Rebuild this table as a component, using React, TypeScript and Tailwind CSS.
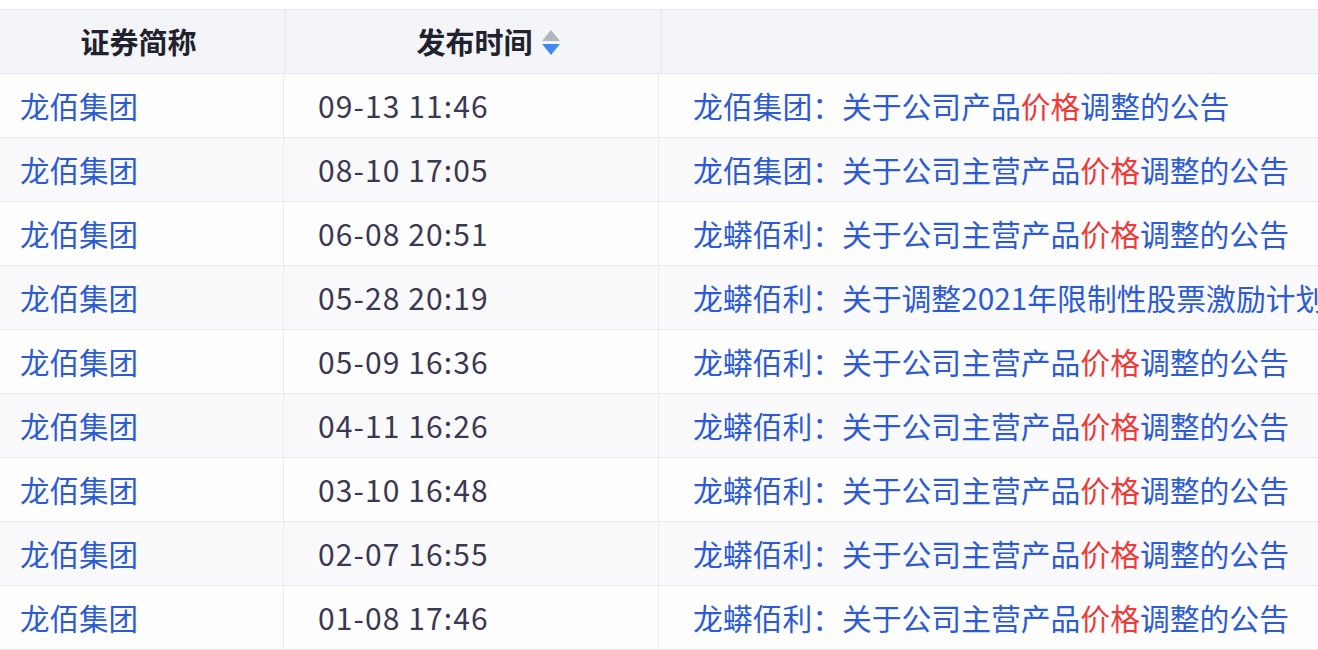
const rows = [
  { name: "龙佰集团", time: "09-13 11:46", title: ["龙佰集团：关于公司产品", "价格", "调整的公告"] },
  { name: "龙佰集团", time: "08-10 17:05", title: ["龙佰集团：关于公司主营产品", "价格", "调整的公告"] },
  { name: "龙佰集团", time: "06-08 20:51", title: ["龙蟒佰利：关于公司主营产品", "价格", "调整的公告"] },
  { name: "龙佰集团", time: "05-28 20:19", title: ["龙蟒佰利：关于调整2021年限制性股票激励计划首次授予部分相关事项的公告", "", ""] },
  { name: "龙佰集团", time: "05-09 16:36", title: ["龙蟒佰利：关于公司主营产品", "价格", "调整的公告"] },
  { name: "龙佰集团", time: "04-11 16:26", title: ["龙蟒佰利：关于公司主营产品", "价格", "调整的公告"] },
  { name: "龙佰集团", time: "03-10 16:48", title: ["龙蟒佰利：关于公司主营产品", "价格", "调整的公告"] },
  { name: "龙佰集团", time: "02-07 16:55", title: ["龙蟒佰利：关于公司主营产品", "价格", "调整的公告"] },
  { name: "龙佰集团", time: "01-08 17:46", title: ["龙蟒佰利：关于公司主营产品", "价格", "调整的公告"] },
];

function SortIcon() {
  return (
    <svg width="20" height="30" viewBox="0 0 20 30" className="ml-[8px]">
      <path d="M10 3 L19 14 L1 14 Z" fill="#b4b6bf" />
      <path d="M1 17 L19 17 L10 28 Z" fill="#3d8bf2" />
    </svg>
  );
}

export default function App() {
  return (
    <div
      className="h-[650px] w-[1318px] overflow-hidden bg-white pt-[9px]"
      style={{ fontFamily: '"Noto Sans CJK SC", "Noto Sans", sans-serif' }}
    >
      <div className="flex h-[65px] border-y border-[#e8e9ee] bg-[#f4f5f9] text-[29px] font-bold text-[#22212e]">
        <div className="flex w-[286px] shrink-0 items-center justify-center border-r border-[#e3e4ea] pr-[8px]">
          证券简称
        </div>
        <div className="flex w-[376px] shrink-0 items-center justify-center border-r border-[#e3e4ea] pl-[30px]">
          发布时间
          <SortIcon />
        </div>
        <div className="flex-1" />
      </div>
      {rows.map((r, i) => (
        <div
          key={i}
          className={`flex h-[64px] border-b border-[#e9eaef] ${i % 2 === 1 ? "bg-[#fafafc]" : "bg-[#fefefe]"}`}
        >
          <div className="flex w-[284px] shrink-0 items-center border-r border-[#ebecf0] pl-[20px] text-[29.5px] text-[#2c5bd4]">
            {r.name}
          </div>
          <div className="flex w-[375px] shrink-0 items-center border-r border-[#ebecf0] pl-[34px] text-[30px] tracking-[1.1px] text-[#3b3852]">
            {r.time}
          </div>
          <div className="flex min-w-0 flex-1 items-center overflow-hidden whitespace-nowrap pl-[34px] text-[29.8px] text-[#2c5bd4]">
            {r.title[0]}
            {r.title[1] && <span className="text-[#f03a3a]">{r.title[1]}</span>}
            {r.title[2]}
          </div>
        </div>
      ))}
    </div>
  );
}
